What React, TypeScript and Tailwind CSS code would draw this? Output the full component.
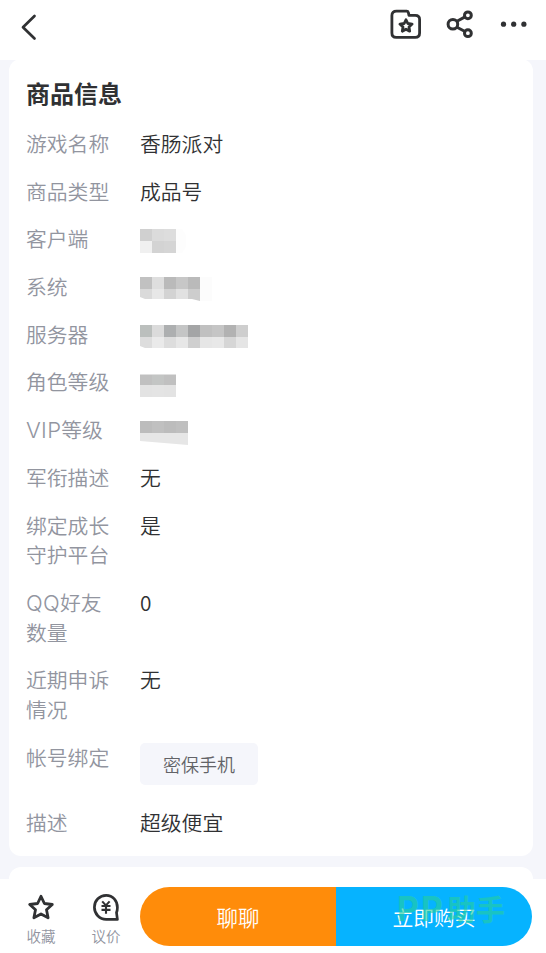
import type { ReactNode } from "react";

type Mosaic = { cells: string[][]; heights: number[]; className: string; clip?: string };

const Blurred = ({ cells, heights, className, clip }: Mosaic) => (
  <div className={className} style={{ clipPath: clip }}>
    {cells.map((row, i) => (
      <div key={i} className="flex" style={{ height: heights[i] }}>
        {row.map((c, j) => <span key={j} className="w-3" style={{ backgroundColor: c }} />)}
      </div>
    ))}
  </div>
);

const Latin = ({ children }: { children: ReactNode }) => (
  <span className="font-['Inter'] text-[22px] leading-none font-light tracking-[0.3px]">{children}</span>
);

const rows: { label: ReactNode[]; value: ReactNode }[] = [
  { label: ["游戏名称"], value: "香肠派对" },
  { label: ["商品类型"], value: "成品号" },
  {
    label: ["客户端"],
    value: <Blurred className="mt-[4.8px]" heights={[12, 12]} clip="polygon(0 0, 42px 0, 46px 6px, 46px 18px, 42px 100%, 0 100%)" cells={[
      ["#d0d0d0", "#dbdbdb", "#dddddd", "#fdfdfd"],
      ["#f0f0f0", "#d3d3d3", "#d5d5d5", "#fdfdfd"],
    ]} />,
  },
  {
    label: ["系统"],
    value: <Blurred className="mt-[5.1px]" heights={[12, 12]} clip="polygon(0 0, 100% 0, 100% 100%, 60px 100%, 52px 22px, 5px 22px, 0 20px)" cells={[
      ["#c1c1c1", "#dedede", "#bababa", "#c7c7c7", "#bababa", "#fcfcfc"],
      ["#dadada", "#e7e7e7", "#d3d3d3", "#e1e1e1", "#cdcdcd", "#fcfcfc"],
    ]} />,
  },
  {
    label: ["服务器"],
    value: <Blurred className="mt-[5.4px]" heights={[12, 11]} clip="polygon(0 0, 100% 0, 100% 100%, 5px 100%, 0 21px)" cells={[
      ["#bbbfbd", "#dbdbdb", "#adafb0", "#c4c5c5", "#a4a5a6", "#c0c0c0", "#c5c5c5", "#b2b2b2", "#cecece"],
      ["#dddddd", "#eaeaea", "#dddddd", "#e7e7e7", "#cfcfcf", "#e6e6e6", "#e8e8e8", "#d6d6d6", "#e5e5e5"],
    ]} />,
  },
  {
    label: ["角色等级"],
    value: <Blurred className="mt-[6.7px]" heights={[1, 10, 12]} cells={[
      ["#e0e0e0", "#e0e0e0", "#e0e0e0"],
      ["#c0c0c0", "#c3c5c4", "#c0c0c0"],
      ["#e3e3e3", "#e4e4e4", "#e3e3e3"],
    ]} />,
  },
  {
    label: [<><Latin>VIP</Latin>等级</>],
    value: <Blurred className="mt-[6px]" heights={[12, 12]} clip="polygon(0 0, 100% 0, 100% 100%, 0 20px)" cells={[
      ["#bcbcbc", "#c0c0c0", "#bcbcbc", "#bfbfbf"],
      ["#e6e6e6", "#e6e6e6", "#e6e6e6", "#e6e6e6"],
    ]} />,
  },
  { label: ["军衔描述"], value: "无" },
  { label: ["绑定成长", "守护平台"], value: "是" },
  { label: [<><Latin>QQ</Latin>好友</>, "数量"], value: "0" },
  { label: ["近期申诉", "情况"], value: "无" },
  {
    label: ["帐号绑定"],
    value: (
      <div className="mt-[0.3px] mb-[5px] flex h-[42px] w-[118px] items-center justify-center rounded-[5px] bg-[#f5f6fb] pt-px text-[18px] text-[#626367]">
        密保手机
      </div>
    ),
  },
  { label: ["描述"], value: "超级便宜" },
];

const Header = () => (
  <header className="flex h-[60px] shrink-0 items-start bg-white pl-5 text-[#303133]">
    <svg className="mt-[13px]" width="18" height="28" viewBox="0 0 18 28" fill="none" stroke="currentColor" strokeWidth="2.7" strokeLinecap="round" strokeLinejoin="round">
      <path d="M14.5 3 3 14.2 14.5 25.5" />
    </svg>
    <svg className="mt-2 ml-[352px]" width="32" height="32" viewBox="0 0 32 32" fill="none" stroke="currentColor" strokeWidth="2.8" strokeLinejoin="round">
      <path d="M6.5 3.2H16.6Q18 3.2 18.4 4.6L19 7.4H25.3Q29.6 7.4 29.6 11.5V25Q29.6 29.4 25.3 29.4H6.2Q1.9 29.4 1.9 25V7.5Q1.9 3.2 6.5 3.2Z" />
      <path d="m16 11.8 1.8 3.7 4.3.6-3.1 2.9.7 4.2-3.7-2-3.7 2 .7-4.2-3.1-2.9 4.3-.6Z" />
    </svg>
    <svg className="mt-2 ml-6" width="28" height="32" viewBox="0 0 28 32" fill="none" stroke="currentColor" strokeWidth="3">
      <circle cx="6.9" cy="16.3" r="4.8" />
      <circle cx="21.9" cy="7.3" r="3.4" />
      <circle cx="21.9" cy="25.2" r="3.4" />
      <path d="m11 13.2 8-4.3M11 19.2l8 4.3" />
    </svg>
    <svg className="mt-5 ml-[26px]" width="28" height="8" viewBox="0 0 28 8" fill="currentColor">
      <circle cx="3.5" cy="4.2" r="2.6" />
      <circle cx="13.7" cy="4.2" r="2.6" />
      <circle cx="23.9" cy="4.2" r="2.6" />
    </svg>
  </header>
);

const BottomBar = () => (
  <footer className="flex h-[74px] shrink-0 bg-white pt-2 text-[#303133]">
    <div className="ml-[21px] flex w-10 flex-col items-center">
      <svg className="mt-[6px]" width="28" height="28" viewBox="0 0 28 28" fill="none" stroke="currentColor" strokeWidth="2.8" strokeLinejoin="round">
        <path d="m14 3.3 3.4 7.2 7.9 1-5.8 5.3 1.6 8-7.1-3.9-7.1 3.9 1.6-8-5.8-5.3 7.9-1Z" />
      </svg>
      <span className="mt-[5px] text-[14.5px] leading-5 whitespace-nowrap text-[#9194a0]">收藏</span>
    </div>
    <div className="ml-[25px] flex w-10 flex-col items-center">
      <svg className="mt-[6px]" width="28" height="28" viewBox="0 0 28 28" fill="none" stroke="currentColor" strokeWidth="2.7" strokeLinejoin="round">
        <path d="M25.4 14.4C25.4 7.6 20.8 2.4 14.2 2.4S2.4 7.6 2.4 14.2 7.4 26.4 14.2 26.4H25.4L24.5 19.6Q25.4 17.4 25.4 14.4Z" />
        <path strokeWidth="2.1" d="m10.2 8.4 3.7 4 3.7-4M9.5 13h9M9.5 16.9h9M14 12.4v8.4" />
      </svg>
      <span className="mt-[5px] text-[14.5px] leading-5 whitespace-nowrap text-[#9194a0]">议价</span>
    </div>
    <div className="relative ml-[14px] flex h-[59px] w-[392px] overflow-hidden rounded-full text-[20.8px] text-white">
      <button className="w-[196px] bg-[#ff8c0a] pt-0.5 text-[21.5px]">聊聊</button>
      <button className="w-[196px] bg-[#06b3ff] pt-0.5">立即购买</button>
      <span className="pointer-events-none absolute top-0 left-[257px] flex text-[29px] leading-[42px] font-bold whitespace-nowrap text-[#26cf9b]/60">
        <span className="w-[50px] pt-px font-['Inter'] text-[34px] tracking-[2px]">PP</span>助手
      </span>
    </div>
  </footer>
);

export default function App() {
  return (
    <div className="flex h-[953px] w-[546px] flex-col overflow-hidden bg-[#f5f6fb] font-['Noto_Sans_CJK_SC',sans-serif] font-[350]">
      <Header />
      <main className="min-h-0 flex-1 overflow-hidden pr-[13px] pl-[9px]">
        <section className="-mt-px h-[797px] rounded-xl bg-white px-[17px] pt-[18px] text-[#303133]">
          <h1 className="h-[51.8px] text-[24px] leading-8 font-bold">商品信息</h1>
          <dl className="flex flex-col gap-[18px] text-[20.8px] leading-[29.7px]">
            {rows.map((r, i) => (
              <div key={i} className="flex items-start">
                <dt className="w-[114px] shrink-0 text-[#92959f]">
                  {r.label.map((line, j) => <span key={j} className="block h-[29.7px]">{line}</span>)}
                </dt>
                <dd>{r.value}</dd>
              </div>
            ))}
          </dl>
        </section>
        <section className="mt-[11px] h-12 rounded-xl bg-white" />
      </main>
      <BottomBar />
    </div>
  );
}
